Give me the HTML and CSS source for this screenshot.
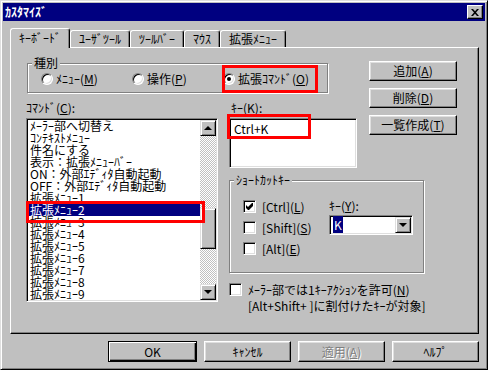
FILE: index.html
```html
<!DOCTYPE html>
<html lang="ja">
<head>
  <meta charset="UTF-8">
  <title>ｶｽﾀﾏｲｽﾞ</title>
  <link rel="stylesheet" href="styles.css">
</head>
<body>

  <div class="window">
    <div class="titlebar">
      <span class="title">ｶｽﾀﾏｲｽﾞ</span>
      <span class="close-btn">
        <svg width="8" height="7" viewBox="0 0 8 7"><path d="M0 0h2l2 2.3L6 0h2L5 3.5 8 7H6L4 4.7 2 7H0l3-3.5z" fill="#000"/></svg>
      </span>
    </div>

    <div class="client">
      <div class="tabs">
        <div class="tab active">ｷｰﾎﾞｰﾄﾞ</div>
        <div class="tab">ﾕｰｻﾞﾂｰﾙ</div>
        <div class="tab">ﾂｰﾙﾊﾞｰ</div>
        <div class="tab">ﾏｳｽ</div>
        <div class="tab">拡張ﾒﾆｭｰ</div>
      </div>

      <div class="panel">
        <fieldset class="group kind">
          <legend>種別</legend>
          <div class="radio-row">
            <span class="radio"><span class="radio-dot"></span>ﾒﾆｭｰ(<u>M</u>)</span>
            <span class="radio"><span class="radio-dot"></span>操作(<u>P</u>)</span>
            <span class="radio"><span class="radio-dot on"></span>拡張ｺﾏﾝﾄﾞ(<u>O</u>)</span>
          </div>
        </fieldset>

        <div class="side-btns">
          <div class="btn">追加(<u>A</u>)</div>
          <div class="btn">削除(<u>D</u>)</div>
          <div class="btn">一覧作成(<u>T</u>)</div>
        </div>

        <div class="label cmd-label">ｺﾏﾝﾄﾞ(<u>C</u>):</div>
        <div class="label key-label">ｷｰ(<u>K</u>):</div>

        <div class="listbox">
          <ul class="list-items">
            <li>ﾒｰﾗｰ部へ切替え</li>
            <li>ｺﾝﾃｷｽﾄﾒﾆｭｰ</li>
            <li>件名にする</li>
            <li>表示：拡張ﾒﾆｭｰﾊﾞｰ</li>
            <li>ON：外部ｴﾃﾞｨﾀ自動起動</li>
            <li>OFF：外部ｴﾃﾞｨﾀ自動起動</li>
            <li>拡張ﾒﾆｭｰ1</li>
            <li class="selected">拡張ﾒﾆｭｰ2</li>
            <li>拡張ﾒﾆｭｰ3</li>
            <li>拡張ﾒﾆｭｰ4</li>
            <li>拡張ﾒﾆｭｰ5</li>
            <li>拡張ﾒﾆｭｰ6</li>
            <li>拡張ﾒﾆｭｰ7</li>
            <li>拡張ﾒﾆｭｰ8</li>
            <li>拡張ﾒﾆｭｰ9</li>
          </ul>
          <div class="scrollbar">
            <div class="sb-btn"><span class="arrow-up"></span></div>
            <div class="sb-track top"></div>
            <div class="sb-thumb"></div>
            <div class="sb-track"></div>
            <div class="sb-btn"><span class="arrow-down"></span></div>
          </div>
        </div>

        <div class="textbox key-box">Ctrl+K</div>

        <fieldset class="group shortcut">
          <legend>ｼｮｰﾄｶｯﾄｷｰ</legend>
          <div class="sc-body">
            <div class="sc-checks">
              <div class="check"><span class="check-box on"><svg width="7" height="7" viewBox="0 0 7 7"><path d="M0 2l2 2 4-4h1v3L3 7H2L0 5z" fill="#000"/></svg></span>[Ctrl](<u>L</u>)</div>
              <div class="check"><span class="check-box"></span>[Shift](<u>S</u>)</div>
              <div class="check"><span class="check-box"></span>[Alt](<u>E</u>)</div>
            </div>
            <div class="sc-key">
              <div class="label">ｷｰ(<u>Y</u>):</div>
              <div class="combo">
                <span class="combo-value"><span class="sel">K</span></span>
                <span class="sb-btn"><span class="arrow-down"></span></span>
              </div>
            </div>
          </div>
        </fieldset>

        <div class="check mailer">
          <span class="check-box"></span>
          <div class="mailer-text">
            <div>ﾒｰﾗｰ部では1ｷｰｱｸｼｮﾝを許可(<u>N</u>)</div>
            <div>[Alt+Shift+ ]に割付けたｷｰが対象]</div>
          </div>
        </div>
      </div>

      <div class="dialog-btns">
        <div class="btn default">OK</div>
        <div class="btn">ｷｬﾝｾﾙ</div>
        <div class="btn disabled">適用(<u>A</u>)</div>
        <div class="btn">ﾍﾙﾌﾟ</div>
      </div>
    </div>

    <div class="mark mark-kind"></div>
    <div class="mark mark-item"></div>
    <div class="mark mark-key"></div>
  </div>

</body>
</html>
```

FILE: styles.css
```css
* {
  box-sizing: border-box;
}
body {
  margin: 0;
  background: #c0c0c0;
  font-family: "Noto Sans CJK JP", "Liberation Sans", sans-serif;
  font-size: 12px;
  line-height: 14px;
  color: #000;
}
u {
  text-underline-offset: 1px;
}
.window {
  position: relative;
  width: 488px;
  height: 370px;
  background: #c0c0c0;
  border: 1px solid;
  border-color: #dfdfdf #000 #000 #dfdfdf;
  box-shadow: inset 1px 1px #fff, inset -1px -1px #808080;
  padding: 2px;
}
.titlebar {
  display: flex;
  align-items: center;
  justify-content: space-between;
  height: 18px;
  background: #000080;
  color: #fff;
  padding: 0 2px;
}
.title {
  font-weight: bold;
}
.close-btn {
  display: flex;
  align-items: center;
  justify-content: center;
  width: 16px;
  height: 14px;
  background: #c0c0c0;
  border: 1px solid;
  border-color: #fff #000 #000 #fff;
  box-shadow: inset -1px -1px #808080;
}

/* tabs + panel */
.client {
  padding: 7px 6px 0 7px;
}
.tabs {
  display: flex;
  align-items: flex-end;
  height: 20px;
  margin-bottom: -1px;
  padding-left: 2px;
  position: relative;
  z-index: 1;
}
.tab {
  height: 17px;
  margin-bottom: 1px;
  padding: 0 8px;
  line-height: 15px;
  background: #c0c0c0;
  border: 1px solid;
  border-color: #fff #000 transparent #fff;
  border-bottom: none;
  border-radius: 3px 3px 0 0;
  box-shadow: inset -1px 0 #808080;
}
.tab.active {
  height: 20px;
  margin: 0 0 0 -2px;
  padding: 1px 8px 0;
  position: relative;
  z-index: 2;
}
.panel {
  display: grid;
  grid-template-columns: 192px 11px 128px 12px 88px;
  grid-template-rows: 45px 17px 55px 106px auto;
  grid-template-areas:
    "kind kind kind kind btns"
    "clab . klab klab btns"
    "list . kbox . btns"
    "list . sc sc sc"
    "list . chk chk chk";
  height: 287px;
  padding: 8px 0 0 15px;
  border: 1px solid;
  border-color: #fff #000 #000 #fff;
  box-shadow: inset -1px -1px #808080;
}

/* group boxes */
.group {
  margin: 0;
  padding: 0;
  min-inline-size: 0;
  border: 1px solid #808080;
  box-shadow: inset 1px 1px #fff, 1px 1px #fff;
}
.group legend {
  margin-left: 4px;
  padding: 0 2px;
  background: #c0c0c0;
}
.kind {
  grid-area: kind;
  align-self: start;
  width: 301px;
  height: 37px;
  margin-left: 1px;
}
.radio-row {
  display: flex;
  padding: 1px 0 0 13px;
}
.radio {
  display: flex;
  align-items: center;
  width: 91px;
  height: 16px;
}
.radio-dot {
  position: relative;
  width: 12px;
  height: 12px;
  margin-right: 3px;
  border-radius: 50%;
  background: #fff;
  border: 1px solid;
  border-color: #808080 #fff #fff #808080;
  box-shadow: inset 1px 1px #000, inset -1px -1px #dfdfdf;
}
.radio-dot.on::after {
  content: "";
  position: absolute;
  left: 3px;
  top: 3px;
  width: 4px;
  height: 4px;
  border-radius: 50%;
  background: #000;
}

/* buttons */
.side-btns {
  grid-area: btns;
  display: flex;
  flex-direction: column;
  gap: 7px;
  margin-top: 5px;
}
.btn {
  display: flex;
  align-items: center;
  justify-content: center;
  height: 20px;
  background: #c0c0c0;
  border: 1px solid;
  border-color: #fff #000 #000 #fff;
  box-shadow: inset -1px -1px #808080, inset 1px 1px #dfdfdf;
}
.dialog-btns {
  display: flex;
  justify-content: flex-end;
  gap: 7px;
  margin-top: 7px;
}
.dialog-btns .btn {
  width: 87px;
  height: 21px;
}
.dialog-btns .btn.default {
  width: 89px;
  border-color: #000;
  box-shadow: inset 1px 1px #fff, inset -1px -1px #000, inset -2px -2px #808080;
}
.btn.disabled {
  color: #808080;
  text-shadow: 1px 1px #fff;
}

/* labels, list, text box */
.label {
  white-space: nowrap;
}
.cmd-label {
  grid-area: clab;
}
.key-label {
  grid-area: klab;
  padding-left: 2px;
}
.listbox {
  grid-area: list;
  align-self: start;
  display: flex;
  height: 184px;
  background: #fff;
  border: 1px solid;
  border-color: #808080 #fff #fff #808080;
  box-shadow: inset 1px 1px #000, inset -1px -1px #dfdfdf;
  padding: 1px;
}
.list-items {
  flex: 1;
  margin: 0;
  padding: 0;
  list-style: none;
}
.list-items li {
  height: 12px;
  line-height: 12px;
  padding-left: 2px;
  white-space: nowrap;
}
.list-items li.selected {
  background: #000080;
  color: #fff;
}
.scrollbar {
  display: flex;
  flex-direction: column;
  width: 16px;
}
.sb-btn {
  display: flex;
  align-items: center;
  justify-content: center;
  width: 16px;
  height: 16px;
  background: #c0c0c0;
  border: 1px solid;
  border-color: #dfdfdf #000 #000 #dfdfdf;
  box-shadow: inset 1px 1px #fff, inset -1px -1px #808080;
}
.sb-track {
  flex: 1;
  background: repeating-conic-gradient(#c0c0c0 0 25%, #fff 0 50%) 0 0 / 2px 2px;
}
.sb-track.top {
  flex: none;
  height: 72px;
}
.sb-thumb {
  height: 41px;
  background: #c0c0c0;
  border: 1px solid;
  border-color: #dfdfdf #000 #000 #dfdfdf;
  box-shadow: inset 1px 1px #fff, inset -1px -1px #808080;
}
.arrow-up,
.arrow-down {
  width: 0;
  height: 0;
  border-left: 4px solid transparent;
  border-right: 4px solid transparent;
}
.arrow-up {
  border-bottom: 4px solid #000;
}
.arrow-down {
  border-top: 4px solid #000;
}
.textbox {
  background: #fff;
  border: 1px solid;
  border-color: #808080 #fff #fff #808080;
  box-shadow: inset 1px 1px #000, inset -1px -1px #dfdfdf;
}
.key-box {
  grid-area: kbox;
  height: 50px;
  padding: 3px 4px;
}

/* shortcut group */
.shortcut {
  grid-area: sc;
  align-self: start;
  width: 195px;
  height: 100px;
}
.sc-body {
  display: flex;
  padding: 9px 0 0 13px;
}
.sc-checks {
  width: 86px;
}
.check {
  display: flex;
  align-items: center;
  height: 21px;
  white-space: nowrap;
}
.check-box {
  display: flex;
  align-items: center;
  justify-content: center;
  flex: none;
  width: 13px;
  height: 13px;
  margin-right: 6px;
  background: #fff;
  border: 1px solid;
  border-color: #808080 #fff #fff #808080;
  box-shadow: inset 1px 1px #000, inset -1px -1px #dfdfdf;
}
.sc-key .label {
  margin-top: 3px;
}
.combo {
  display: flex;
  align-items: center;
  width: 84px;
  height: 20px;
  margin-top: 2px;
  padding: 1px;
  background: #fff;
  border: 1px solid;
  border-color: #808080 #fff #fff #808080;
  box-shadow: inset 1px 1px #000, inset -1px -1px #dfdfdf;
}
.combo-value {
  flex: 1;
  padding-left: 2px;
}
.combo .sel {
  background: #000080;
  color: #fff;
  padding: 0 1px;
}
.mailer {
  grid-area: chk;
  align-items: flex-start;
  height: auto;
  margin-top: 4px;
}
.mailer-text {
  line-height: 16px;
  margin-top: -1px;
}

/* red annotation frames */
.mark {
  position: absolute;
  border: 3px solid #f00;
  z-index: 5;
}
.mark-kind {
  left: 221px;
  top: 64px;
  width: 96px;
  height: 28px;
}
.mark-item {
  left: 25px;
  top: 200px;
  width: 179px;
  height: 22px;
}
.mark-key {
  left: 226px;
  top: 113px;
  width: 84px;
  height: 25px;
}
```
